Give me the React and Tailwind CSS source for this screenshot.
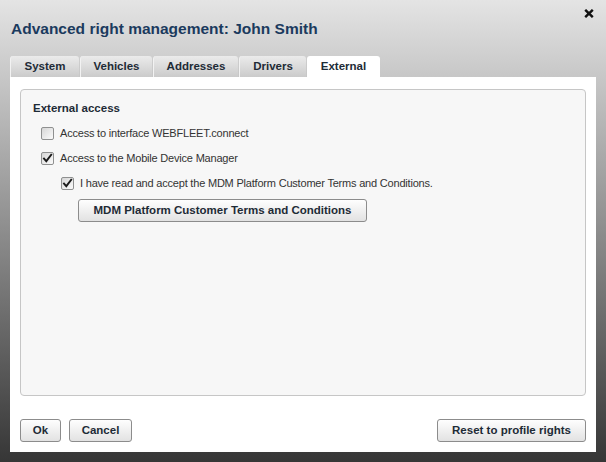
import React from "react";

function CheckBox({ checked }) {
  return (
    <span className="flex h-[13px] w-[13px] shrink-0 items-center justify-center rounded-[2px] border border-[#8f9090] bg-[linear-gradient(135deg,#d6d6d6,#fbfbfb)]">
      {checked && (
        <svg width="11" height="11" viewBox="0 0 11 11">
          <path d="M2 5.6 L4.3 8.2 L9.2 1.8" fill="none" stroke="#1a1a1a" strokeWidth="1.9" strokeLinecap="square" />
        </svg>
      )}
    </span>
  );
}

function Btn({ children, w }) {
  return (
    <button
      className={`flex h-[23px] ${w} items-center justify-center rounded-[3px] border border-[#8c8c8c] bg-[linear-gradient(#fefefe,#e2e2e2)] text-[11.5px] font-bold text-[#1e2b36]`}
    >
      {children}
    </button>
  );
}

const tabs = [
  { name: "System", w: "w-[69px]" },
  { name: "Vehicles", w: "w-[72px]" },
  { name: "Addresses", w: "w-[85px]" },
  { name: "Drivers", w: "w-[67px]" },
];

export default function App() {
  return (
    <div className="flex h-[462px] w-[606px] flex-col overflow-hidden bg-[linear-gradient(#e4e4e4,#363636)] font-['Liberation_Sans',Arial,sans-serif]">
      <div className="flex h-[56px] justify-between pl-[11px] pr-[12px]">
        <div className="pt-[20px] text-[15.5px] font-bold leading-[18px] text-[#1b3a5e]">
          Advanced right management: John Smith
        </div>
        <div className="pt-[9px]">
          <svg width="10" height="9" viewBox="0 0 10 9">
            <path d="M1.2 0.8 L8.8 8.2 M8.8 0.8 L1.2 8.2" stroke="#111" strokeWidth="2.4" />
          </svg>
        </div>
      </div>
      <div className="flex h-[21px] gap-px pl-[10px]">
        {tabs.map((t) => (
          <div
            key={t.name}
            className={`flex h-full ${t.w} items-center justify-center rounded-t-[3px] border-l border-[#f2f2f2] bg-[linear-gradient(#ebebeb,#cbcbcb)] text-[11.5px] font-bold text-[#1e2b36]`}
          >
            {t.name}
          </div>
        ))}
        <div className="flex h-full w-[73px] items-center justify-center rounded-t-[3px] bg-white text-[11.5px] font-bold text-[#1e2b36]">
          External
        </div>
      </div>
      <div className="mx-[10px] flex h-[375px] w-[586px] flex-col bg-white">
        <div className="mx-[10px] mt-[12px] flex h-[307px] flex-col rounded-[4px] border border-[#c6c6c6] bg-[#f7f7f7] pl-[12px] pt-[6px] text-[11px] tracking-[-0.2px] text-[#333]">
          <div className="flex h-[25px] items-center text-[11.5px] font-bold tracking-normal text-[#1e2b36]">
            External access
          </div>
          <div className="ml-[8px] flex h-[25px] items-center gap-[6px]">
            <CheckBox />
            <span>Access to interface WEBFLEET.connect</span>
          </div>
          <div className="ml-[8px] flex h-[25px] items-center gap-[6px]">
            <CheckBox checked />
            <span>Access to the Mobile Device Manager</span>
          </div>
          <div className="ml-[28px] flex h-[25px] items-center gap-[6px]">
            <CheckBox checked />
            <span>I have read and accept the MDM Platform Customer Terms and Conditions.</span>
          </div>
          <div className="ml-[45px] mt-[3px] tracking-normal">
            <Btn w="w-[289px]">MDM Platform Customer Terms and Conditions</Btn>
          </div>
        </div>
        <div className="mt-[23px] flex justify-between pl-[10px] pr-[10px]">
          <div className="flex gap-[8px]">
            <Btn w="w-[41px]">Ok</Btn>
            <Btn w="w-[63px]">Cancel</Btn>
          </div>
          <Btn w="w-[149px]">Reset to profile rights</Btn>
        </div>
      </div>
    </div>
  );
}
